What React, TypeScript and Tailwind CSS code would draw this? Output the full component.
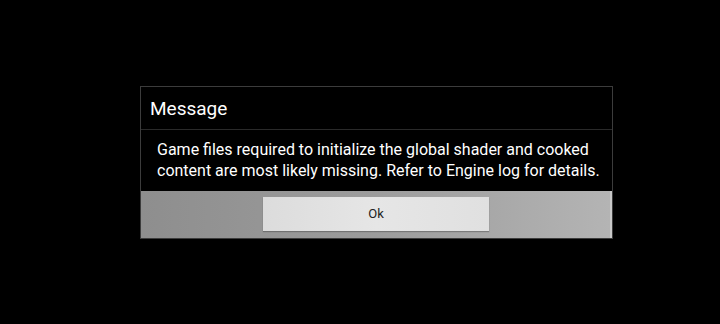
export default function App() {
  return (
    <div className="w-[720px] h-[324px] bg-black flex items-center pl-[140px]" style={{ fontFamily: 'Roboto, sans-serif' }}>
      <div className="w-[473px] border border-[#3c3c3c] flex flex-col">
        <div className="h-[43px] flex items-center pl-[9px] pt-[3px] text-[19px] text-white border-b border-[#2a2a2a]">
          Message
        </div>
        <div className="h-[61px] flex flex-col justify-center px-[16px] text-[16px] leading-[21px] text-white whitespace-nowrap">
          <p>Game files required to initialize the global shader and cooked</p>
          <p>content are most likely missing. Refer to Engine log for details.</p>
        </div>
        <div className="h-[47px] bg-gradient-to-r from-[#8e8e8e] via-[#9c9c9c] to-[#b4b4b4] flex items-center pl-[122px] border-r-2 border-[#c8c8c8]">
          <button className="w-[226px] h-[34px] bg-gradient-to-r from-[#dcdcdc] via-[#e6e6e6] to-[#e0e0e0] text-[13px] text-[#222] shadow-[0_1px_1px_rgba(0,0,0,0.25)]">
            Ok
          </button>
        </div>
      </div>
    </div>
  );
}
